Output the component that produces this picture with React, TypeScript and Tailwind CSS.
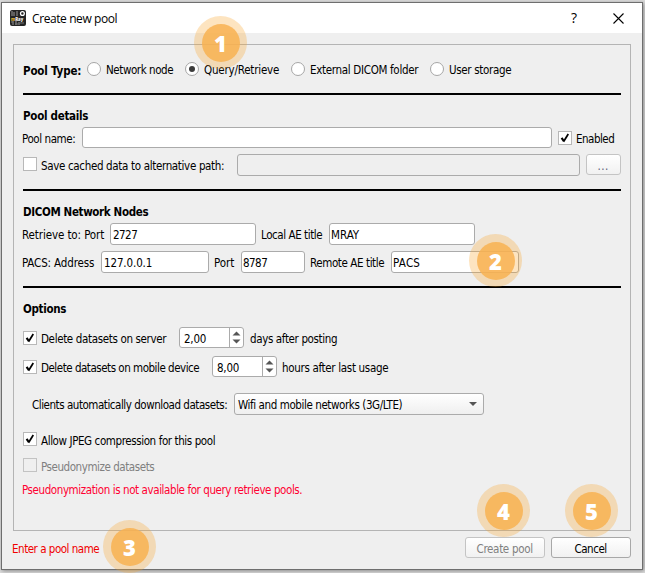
import { useLayoutEffect, useRef } from "react";
import type { ReactNode } from "react";
import { clsx } from "clsx";

const UI_FONT = "font-['DejaVu_Sans_Condensed','DejaVu_Sans',sans-serif] [font-stretch:condensed]";

/** Single-line label whose letters are tracked to fill the width of its box. */
function Label({ className, children }: { className?: string; children: string }) {
  const box = useRef<HTMLSpanElement>(null);
  const text = useRef<HTMLSpanElement>(null);
  useLayoutEffect(() => {
    if (!box.current || !text.current) return;
    text.current.style.letterSpacing = "0px";
    const natural = text.current.getBoundingClientRect().width;
    const target = box.current.getBoundingClientRect().width - 0.8;
    text.current.style.letterSpacing = `${(target - natural) / children.length}px`;
  }, [children]);
  return (
    <span ref={box} className={clsx("-mb-px block shrink-0 pt-px leading-4 whitespace-nowrap", className)}>
      <span ref={text} className="block w-max">{children}</span>
    </span>
  );
}

function Radio({ checked, className }: { checked?: boolean; className?: string }) {
  return (
    <span className={clsx("flex size-3.5 shrink-0 items-center justify-center rounded-full border border-[#a6a6a6] bg-white", className)}>
      {checked && <span className="size-1.5 rounded-full bg-[#3c3c3c]" />}
    </span>
  );
}

function Checkbox({ checked, disabled, className }: { checked?: boolean; disabled?: boolean; className?: string }) {
  return (
    <span className={clsx("flex size-3.5 shrink-0 items-center justify-center border", disabled ? "border-[#c3c3c3] bg-[#efefef]" : "border-[#b8b8b8] bg-white", className)}>
      {checked && (
        <svg viewBox="0 0 12 12" className="size-3" fill="none" stroke="#000">
          <path d="M2.6 5.8 4.7 9" strokeWidth="2.1" />
          <path d="M4.5 9.8 9.3 2" strokeWidth="1.7" />
        </svg>
      )}
    </span>
  );
}

function Field({ disabled, className, children }: { disabled?: boolean; className?: string; children?: ReactNode }) {
  return (
    <span className={clsx("flex shrink-0 items-center rounded-[3px] border border-[#ababab]", disabled ? "bg-[#efefef]" : "bg-white", className)}>
      {children}
    </span>
  );
}

function Spin({ value, className }: { value: string; className?: string }) {
  return (
    <Field className={clsx("h-[21px] w-[65px]", className)}>
      <Label className="ml-1 w-[23px]">{value}</Label>
      <span className="ml-auto flex h-full w-[14px] items-center justify-center border-l border-[#ababab]">
        <svg viewBox="0 0 13 19" className="h-[19px] w-[13px]" fill="#555">
          <path d="M2.5 7.5 6.5 3.5 10.5 7.5ZM2.5 11.5 6.5 15.5 10.5 11.5Z" />
        </svg>
      </span>
    </Field>
  );
}

function Rule({ className }: { className?: string }) {
  return <div className={clsx("h-0.5 w-[598px] bg-black", className)} />;
}

function Badge({ n, className }: { n: string; className: string }) {
  return (
    <span className={clsx("absolute flex size-[53px] items-center justify-center rounded-full bg-[#f9a62f]/30", className)}>
      <span className="flex size-[38px] items-center justify-center rounded-full bg-[#f8b151]/85 font-['Open_Sans',sans-serif] text-[22px] leading-none font-extrabold text-white [font-stretch:normal]">
        {n}
      </span>
    </span>
  );
}

function AppIcon() {
  return (
    <svg viewBox="0 0 16 16" className="size-4 shrink-0">
      <rect width="16" height="16" rx="2" fill="#242424" />
      <path d="M2 1v5M4 2v4M7 1v5M3 11v4M6 11v4M9 12v3" stroke="#999" />
      <path d="M1 12h2M10 13h4M5 14h3" stroke="#777" />
      <circle cx="12.4" cy="3.5" r="1.9" fill="none" stroke="#fff" strokeWidth="1.3" />
      <text x="1" y="10.6" fontSize="5.6" fontWeight="700" fontFamily="Open Sans, sans-serif" fill="#fff">
        <tspan fill="#e8b830">m</tspan>Ray
      </text>
    </svg>
  );
}

export default function App() {
  return (
    <div className={clsx("relative h-[573px] w-[645px] overflow-hidden bg-[#dcdcdc] pt-0.5 pl-px text-[11.5px] text-black", UI_FONT)}>
      <div className="h-[568px] w-[642px] border border-[#6e6e6e] bg-[#efefef] shadow-[1px_1px_4px_#888]">
        <header className="flex h-[30px] items-center bg-white pl-2">
          <AppIcon />
          <Label className="ml-1.5 w-[86px] font-['Open_Sans',sans-serif] text-xs [font-stretch:normal]">Create new pool</Label>
          <span className="ml-[453px] w-2 font-['Open_Sans',sans-serif] text-sm font-medium [font-stretch:normal]">?</span>
          <svg viewBox="0 0 11 11" className="ml-[34px] size-[11px]" stroke="#000" strokeWidth="1.1">
            <path d="M.5 .5 10.5 10.5M10.5 .5 .5 10.5" />
          </svg>
        </header>

        <main className="mt-[11px] ml-[11px] h-[487px] w-[618px] border border-[#b4b4b4] pl-[9px]">
          <div className="flex h-12 items-center">
            <Label className="mt-0.5 w-[59px] font-bold">Pool Type:</Label>
            <Radio className="ml-[5px]" />
            <Label className="ml-[5px] w-[68px]">Network node</Label>
            <Radio checked className="ml-[11px]" />
            <Label className="ml-[5px] w-[76px]">Query/Retrieve</Label>
            <Radio className="ml-[11px]" />
            <Label className="ml-[5px] w-[109px]">External DICOM folder</Label>
            <Radio className="ml-[11px]" />
            <Label className="ml-[5px] w-[63px]">User storage</Label>
          </div>
          <Rule />

          <Label className="mt-3 w-[66px] font-bold">Pool details</Label>
          <div className="mt-1 flex h-[21px] items-center">
            <Label className="-ml-px w-[54px]">Pool name:</Label>
            <Field className="ml-1.5 h-[21px] w-[470px]" />
            <Checkbox checked className="ml-1.5" />
            <Label className="ml-1 w-[39px]">Enabled</Label>
          </div>
          <div className="mt-1.5 flex h-[22px] items-center">
            <Checkbox className="-mt-0.5" />
            <Label className="ml-1 w-[184px]">Save cached data to alternative path:</Label>
            <Field disabled className="ml-3 h-[22px] w-[343px]" />
            <span className="mb-px ml-1.5 flex h-[21px] w-[35px] items-center justify-center rounded-[3px] border border-[#c4c4c4] bg-linear-to-b from-white to-[#f1f1f1] text-[#5a5a78]">
              <Label className="w-3">...</Label>
            </span>
          </div>
          <Rule className="mt-[13px]" />

          <Label className="mt-3 w-[126px] font-bold">DICOM Network Nodes</Label>
          <div className="mt-1 flex h-[22px] items-center">
            <Label className="-ml-px w-[83px]">Retrieve to: Port</Label>
            <Field className="ml-[5px] h-[22px] w-[146px] pl-0.5">
              <Label className="w-[25px]">2727</Label>
            </Field>
            <Label className="ml-[5px] w-[62px]">Local AE title</Label>
            <Field className="ml-1.5 h-[22px] w-[146px] pl-px">
              <Label className="w-[29px]">MRAY</Label>
            </Field>
          </div>
          <div className="mt-1.5 flex h-[22px] items-center">
            <Label className="-ml-px w-[73px]">PACS: Address</Label>
            <Field className="ml-1.5 h-[22px] w-[108px] pl-0.5">
              <Label className="w-[49px]">127.0.0.1</Label>
            </Field>
            <Label className="ml-[5px] w-[21px]">Port</Label>
            <Field className="ml-1.5 h-[22px] w-[64px] pl-px">
              <Label className="w-[25px]">8787</Label>
            </Field>
            <Label className="ml-[5px] w-[75px]">Remote AE title</Label>
            <Field className="ml-1.5 h-[22px] w-[128px] pl-px">
              <Label className="w-[28px]">PACS</Label>
            </Field>
          </div>
          <Rule className="mt-[13px]" />

          <Label className="mt-3 w-[44px] font-bold">Options</Label>
          <div className="mt-[11px] flex h-[21px] items-center">
            <Checkbox checked />
            <Label className="ml-1 w-[126px]">Delete datasets on server</Label>
            <Spin value="2,00" className="ml-3" />
            <Label className="ml-1.5 w-[88px]">days after posting</Label>
          </div>
          <div className="mt-2 flex h-[21px] items-center">
            <Checkbox checked />
            <Label className="ml-1 w-[159px]">Delete datasets on mobile device</Label>
            <Spin value="8,00" className="ml-3" />
            <Label className="ml-[5px] w-[107px]">hours after last usage</Label>
          </div>
          <div className="mt-4 flex h-[22px] items-center">
            <Label className="ml-[9px] w-[196px]">Clients automatically download datasets:</Label>
            <span className="ml-1.5 flex h-[22px] w-[250px] items-center rounded-[3px] border border-[#ababab] bg-linear-to-b from-white to-[#efefef] pl-[3px]">
              <Label className="w-[165px]">Wifi and mobile networks (3G/LTE)</Label>
              <svg viewBox="0 0 8 4" className="mr-1.5 ml-auto h-1 w-2" fill="#555">
                <path d="M0 0h8L4 4Z" />
              </svg>
            </span>
          </div>
          <div className="mt-[17px] flex h-3.5 items-center">
            <Checkbox checked />
            <Label className="mt-px ml-1 w-[175px]">Allow JPEG compression for this pool</Label>
          </div>
          <div className="mt-3 flex h-3.5 items-center text-[#808080]">
            <Checkbox disabled />
            <Label className="mt-px ml-1 w-[114px]">Pseudonymize datasets</Label>
          </div>
          <Label className="mt-[9px] -ml-px w-[281px] text-[#ff0032]">Pseudonymization is not available for query retrieve pools.</Label>
        </main>

        <footer className="mt-1.5 flex h-[21px] items-center pl-2.5">
          <Label className="w-[88px] text-[#f00000]">Enter a pool name</Label>
          <span className="ml-[365px] flex h-[21px] w-20 items-center justify-center rounded-[3px] border border-[#c4c4c4] bg-linear-to-b from-white to-[#f1f1f1] text-[#808080]">
            <Label className="w-[57px]">Create pool</Label>
          </span>
          <span className="ml-1.5 flex h-[21px] w-20 items-center justify-center rounded-[3px] border border-[#a8a8a8] bg-linear-to-b from-white to-[#f1f1f1]">
            <Label className="w-[33px]">Cancel</Label>
          </span>
        </footer>
      </div>

      <Badge n="1" className="top-4 left-[194px]" />
      <Badge n="2" className="top-[234px] left-[469px]" />
      <Badge n="3" className="top-[520px] left-[103px]" />
      <Badge n="4" className="top-[484px] left-[477px]" />
      <Badge n="5" className="top-[484px] left-[565px]" />
    </div>
  );
}
